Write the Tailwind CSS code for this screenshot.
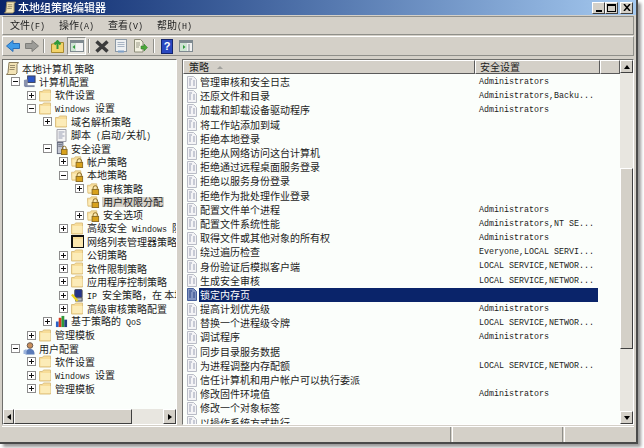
<!DOCTYPE html>
<html lang="zh-CN">
<head>
<meta charset="UTF-8">
<title>本地组策略编辑器</title>
<script src="https://cdn.jsdelivr.net/npm/@tailwindcss/browser@4"></script>
</head>
<body class="bg-white overflow-hidden w-[644px] h-[448px] text-[10px] leading-none text-[#1c1c1c] font-['Noto_Sans_CJK_SC',sans-serif]">
<svg class="hidden">
  <symbol id="doc" viewBox="0 0 12 13"><path d="M1.500.5h6l3 3v9h-9z" fill="#f4f4f6" stroke="#b9bcc6"/><path d="M3 3h3M3 5h2M7 5h2M3 7h2M7 7h2M3 9h2M7 9h2" stroke="#9aa0b4"/></symbol>
  <symbol id="docsel" viewBox="0 0 12 13"><path d="M1.500.5h6l3 3v9h-9z" fill="#8294c0" stroke="#47609c"/><path d="M3 3h3M3 5h2M7 5h2M3 7h2M7 7h2M3 9h2M7 9h2" stroke="#2a4585"/></symbol>
  <symbol id="folder" viewBox="0 0 13 13"><path d="M.5 2.500h3l1-1.500h7v11H.5z" fill="#f8dd98" stroke="#dcc183"/><path d="M1.500 4h10v7h-10z" fill="#fcecb8"/></symbol>
  <symbol id="folderblack" viewBox="0 0 13 13"><path d="M0 0h13v13H0z" fill="#111"/><path d="M2 2h10v10H2z" fill="#f8dd98"/><path d="M2 4h10v8H2z" fill="#fbe7ae"/></symbol>
  <symbol id="lock" viewBox="0 0 14 14"><path d="M.5 3.500h3l1-1.500h6v10h-9.500z" fill="#f8dd98" stroke="#dcc183"/><path d="M1.500 5h8v6h-8z" fill="#fcecb8"/><path d="M6.500 8V6.500a2.500 2.500 0 0 1 5 0V8" fill="none" stroke="#8a6a20"/><rect x="5.500" y="8" width="7" height="5.500" fill="#d8a21c" stroke="#8a6a20"/></symbol>
  <symbol id="plus" viewBox="0 0 9 9"><rect x=".5" y=".5" width="8" height="8" fill="#fff" stroke="#8c8c8c"/><path d="M2 4.500h5M4.500 2v5" stroke="#111"/></symbol>
  <symbol id="minus" viewBox="0 0 9 9"><rect x=".5" y=".5" width="8" height="8" fill="#fff" stroke="#8c8c8c"/><path d="M2 4.500h5" stroke="#111"/></symbol>
  <symbol id="scroll" viewBox="0 0 13 13"><path d="M3 .5h9.500l-1.500 2v8.500l-1.500 1.500H.5l1.500-2z" fill="#f2e3b4" stroke="#8a7d5c"/><path d="M4 3.500h5M4 5.500h5M3.500 7.500h5" stroke="#9a8d6c"/></symbol>
  <symbol id="computer" viewBox="0 0 14 13"><rect x="5" y=".5" width="8" height="7" fill="#2a56c6" stroke="#3a3f58"/><path d="M1 5l4-1v7l-4 1z" fill="#8a93ad"/><path d="M2 11.500h10.500" stroke="#7f8aa6" stroke-width="2"/></symbol>
  <symbol id="user" viewBox="0 0 13 13"><circle cx="7" cy="3.500" r="2.800" fill="#c98f5a" stroke="#6b5a50"/><path d="M2.500 12.500c0-4 1.500-5.500 4.500-5.500s4.500 1.500 4.500 5.500z" fill="#5a7bb8"/><path d="M.5 8.500l3-1.500v5h-3z" fill="#9cb4dc"/></symbol>
  <symbol id="script" viewBox="0 0 12 13"><path d="M1.500.5h9v12h-9z" fill="#f4f4f4" stroke="#a0a0a8"/><path d="M3 3h6M3 5h4M3 7h6M3 9h4" stroke="#9aa0b4"/></symbol>
  <symbol id="secure" viewBox="0 0 13 14"><rect x="2" y=".5" width="6" height="12" fill="#c3c7d2" stroke="#5e6476"/><path d="M3 2.500h4M3 4.500h4" stroke="#5e6476"/><rect x="6.500" y="8" width="6" height="5.500" fill="#d8a21c" stroke="#8a6a20"/><path d="M7.500 8V6.500a2 2 0 0 1 4 0V8" fill="none" stroke="#8a6a20"/></symbol>
  <symbol id="ipsec" viewBox="0 0 13 14"><rect x="3.500" y=".5" width="8" height="9" rx="1" fill="#24348a" stroke="#555"/><rect x="4.500" y="9.500" width="7" height="3.500" fill="#b9bcc6" stroke="#555"/><path d="M.5 6l6 7" stroke="#e8d020" stroke-width="2.500"/></symbol>
  <symbol id="chart" viewBox="0 0 14 14"><rect x="1" y="7" width="3" height="6" fill="#2a62c8"/><rect x="4" y="3" width="3" height="10" fill="#d83a20"/><rect x="7" y="1" width="3" height="12" fill="#2e9a3a"/><rect x="10" y="5" width="3" height="8" fill="#22407e"/></symbol>
</svg>

<div class="w-[638px] h-[444px] bg-[#d4d0c8] border-r-2 border-b-2 border-[#4a4a4a] flex flex-col shadow-[3px_3px_3px_#9a9a9a] blur-[0.3px]">
  <!-- title bar -->
  <div class="h-[15px] shrink-0 flex items-center bg-gradient-to-r from-[#0a246a] to-[#a6caf0] pl-[4px] pr-[3px]">
    <svg class="w-[12px] h-[13px]"><use href="#scroll"/></svg>
    <span class="ml-[2px] text-white font-medium text-[11px]">本地组策略编辑器</span>
    <div class="ml-auto flex items-center">
      <div class="w-[13px] h-[12px] bg-[#d4d0c8] border border-t-white border-l-white border-r-[#404040] border-b-[#404040] flex items-end justify-center pb-[1px]"><div class="w-[6px] h-[2px] bg-black"></div></div>
      <div class="w-[13px] h-[12px] bg-[#d4d0c8] border border-t-white border-l-white border-r-[#404040] border-b-[#404040] flex items-center justify-center"><div class="w-[9px] h-[8px] border border-black border-t-2"></div></div>
      <div class="ml-[2px] w-[13px] h-[12px] bg-[#d4d0c8] border border-t-white border-l-white border-r-[#404040] border-b-[#404040] flex items-center justify-center"><svg class="w-[8px] h-[7px]" viewBox="0 0 8 7"><path d="M1 0l6 7M7 0l-6 7" stroke="#000" stroke-width="1.500"/></svg></div>
    </div>
  </div>
  <!-- menu -->
  <div class="mt-[1px] mx-[2px] h-[19px] shrink-0 flex items-center gap-[14px] pl-[7px] border border-t-[#8f8f8a] border-l-white border-r-[#8f8f8a] border-b-[#8f8f8a]">
    <span>文件<span class="font-['Liberation_Mono'] text-[8.33px]">(F)</span></span>
    <span>操作<span class="font-['Liberation_Mono'] text-[8.33px]">(A)</span></span>
    <span>查看<span class="font-['Liberation_Mono'] text-[8.33px]">(V)</span></span>
    <span>帮助<span class="font-['Liberation_Mono'] text-[8.33px]">(H)</span></span>
  </div>
  <!-- toolbar -->
  <div class="mt-[1px] mx-[2px] h-[20px] shrink-0 flex items-center pl-[3px] border border-t-white border-l-white border-r-[#8f8f8a] border-b-[#8f8f8a]">
    <svg class="w-[14px] h-[12px]" viewBox="0 0 14 12"><path d="M7 .5L.5 6 7 11.500V8.500h6.500v-5H7z" fill="#3f9be8" stroke="#2a6fb8"/></svg>
    <svg class="ml-[5px] w-[14px] h-[12px]" viewBox="0 0 14 12"><path d="M7 .5L13.500 6 7 11.500V8.500H.5v-5H7z" fill="#9c9c98" stroke="#7e7e7a"/></svg>
    <div class="ml-[4px] w-[2px] h-[14px] border-l border-[#8f8f8a] border-r border-r-white"></div>
    <svg class="ml-[6px] w-[13px] h-[13px]" viewBox="0 0 13 13"><path d="M.5 4h2l1-1.500h9V12.500H.5z" fill="#f2d36a" stroke="#a88a30"/><path d="M6.500 9V3M3.500 4.500L6.500 1l3 3.500" fill="none" stroke="#2e9a3a" stroke-width="2"/></svg>
    <div class="ml-[3px] w-[19px] h-[18px] bg-[#e6e4de] border border-t-[#8f8f8a] border-l-[#8f8f8a] border-r-white border-b-white flex items-center justify-center">
      <svg class="w-[14px] h-[12px]" viewBox="0 0 14 12"><rect x=".5" y=".5" width="13" height="11" fill="#f2f2f2" stroke="#7f8a90"/><path d="M1 1h12v2H1z" fill="#7f8a90"/><path d="M1 3h5v8H1z" fill="#cfe4d4"/><path d="M5 5v4L2.500 7z" fill="#2e9a3a"/></svg>
    </div>
    <div class="ml-[2px] w-[2px] h-[14px] border-l border-[#8f8f8a] border-r border-r-white"></div>
    <svg class="ml-[5px] w-[14px] h-[13px]" viewBox="0 0 14 13"><path d="M1.500 1.500l11 10M12.500 1.500l-11 10" stroke="#3c3c3c" stroke-width="3.500"/></svg>
    <svg class="ml-[5px] w-[14px] h-[14px]" viewBox="0 0 14 14"><rect x="1.500" y=".5" width="11" height="12" fill="#eef0f2" stroke="#8c98a4"/><path d="M3.500 3.500h7M3.500 5.500h7M3.500 7.500h7" stroke="#a8b4c4"/><path d="M4 12.500h6" stroke="#7fa0c8" stroke-width="2"/></svg>
    <svg class="ml-[5px] w-[15px] h-[14px]" viewBox="0 0 15 14"><path d="M1.500.5h6l2.500 2.500v10h-8.500z" fill="#f2f0e0" stroke="#8c8c78"/><path d="M3 4h4M3 6h4M3 8h3" stroke="#9a9a88"/><path d="M8 7h3V5l3.500 3.500L11 12v-2H8z" fill="#4aa838" stroke="#2e7a28" stroke-width=".5"/></svg>
    <div class="ml-[5px] w-[2px] h-[14px] border-l border-[#8f8f8a] border-r border-r-white"></div>
    <div class="ml-[6px] w-[12px] h-[15px] bg-[#2a48c0] border border-[#14246e] text-white text-center font-bold text-[11px] leading-[13px] font-['Liberation_Sans']">?</div>
    <svg class="ml-[6px] w-[14px] h-[12px]" viewBox="0 0 14 12"><rect x=".5" y=".5" width="13" height="11" fill="#f2f2f2" stroke="#7f8a90"/><path d="M1 1h12v2H1z" fill="#7f8a90"/><path d="M1 3h7v8H1z" fill="#cfe4d4"/><path d="M4 5v4l2.500-2z" fill="#2e9a3a"/><path d="M10 4v7" stroke="#7f8a90"/></svg>
  </div>
  <!-- panes -->
  <div class="mt-[3px] flex-1 min-h-0 flex pl-[2px] pr-[2px]">
    <div class="w-[175px] shrink-0 flex flex-col border border-t-[#6f6f6c] border-l-[#6f6f6c] border-r-white border-b-white overflow-hidden">
      <div id="tree" class="flex-1 min-h-0 bg-[#fbfefb] pt-[2px] overflow-hidden"></div>
      <div class="h-[15px] shrink-0 flex bg-[#d4d0c8]">
        <div class="w-[11px] border border-t-white border-l-white border-r-[#404040] border-b-[#404040] flex items-center justify-center"><div class="w-0 h-0 border-y-[3.500px] border-y-transparent border-r-[4px] border-r-black"></div></div>
        <div class="w-[118px] border border-t-white border-l-white border-r-[#404040] border-b-[#404040]"></div>
        <div class="flex-1 bg-[#e8e6e0]"></div>
        <div class="w-[13px] border border-t-white border-l-white border-r-[#404040] border-b-[#404040] flex items-center justify-center"><div class="w-0 h-0 border-y-[3.500px] border-y-transparent border-l-[4px] border-l-black"></div></div>
      </div>
    </div>
    <div class="w-[5px] shrink-0"></div>
    <div class="flex-1 min-w-0 flex border border-t-[#6f6f6c] border-l-[#6f6f6c] border-r-white border-b-white overflow-hidden">
      <div class="flex-1 min-w-0 flex flex-col overflow-hidden">
        <div class="h-[14px] shrink-0 flex bg-[#d4d0c8]">
          <div class="w-[292px] flex items-center pl-[5px] border border-t-white border-l-white border-r-[#5a5a5a] border-b-[#5a5a5a]">策略<div class="ml-[8px] w-0 h-0 border-x-[3px] border-x-transparent border-b-[3px] border-b-[#a0a09c]"></div></div>
          <div class="w-[125px] flex items-center pl-[4px] border border-t-white border-l-white border-r-[#5a5a5a] border-b-[#5a5a5a]">安全设置</div>
          <div class="flex-1 border border-t-white border-l-white border-r-[#5a5a5a] border-b-[#5a5a5a]"></div>
        </div>
        <div id="list" class="flex-1 min-h-0 bg-[#fbfefb] pt-[1px] overflow-hidden"></div>
      </div>
      <div class="w-[13px] shrink-0 flex flex-col bg-[#e8e6e0]">
        <div class="h-[13px] bg-[#d4d0c8] border border-t-white border-l-white border-r-[#404040] border-b-[#404040] flex items-center justify-center"><div class="w-0 h-0 border-x-[3.500px] border-x-transparent border-b-[4px] border-b-black"></div></div>
        <div class="h-[95px]"></div>
        <div class="h-[181px] bg-[#d4d0c8] border border-t-white border-l-white border-r-[#404040] border-b-[#404040]"></div>
        <div class="flex-1"></div>
        <div class="h-[13px] bg-[#d4d0c8] border border-t-white border-l-white border-r-[#404040] border-b-[#404040] flex items-center justify-center"><div class="w-0 h-0 border-x-[3.500px] border-x-transparent border-t-[4px] border-t-black"></div></div>
      </div>
    </div>
  </div>
  <!-- status bar -->
  <div class="mt-[1px] mx-[2px] h-[16px] shrink-0 flex border-t border-white">
    <div class="w-[449px] border-r border-[#8f8f8a]"></div>
    <div class="w-[2px] border-r border-white"></div>
    <div class="w-[110px] border-r border-[#8f8f8a]"></div>
    <div class="w-[2px] border-r border-white"></div>
    <div class="flex-1"></div>
  </div>
</div>

<script>
  const latin = s => s.replace(/[\x20-\x7e]*[\x21-\x7e][\x20-\x7e]*/g, m => `<span class="font-['Liberation_Mono'] text-[8.33px]">${m}</span>`);

  // level, expander, icon, label
  const treeRows = [
    [0, '', 'scroll', '本地计算机 策略'],
    [1, 'minus', 'computer', '计算机配置'],
    [2, 'plus', 'folder', '软件设置'],
    [2, 'minus', 'folder', 'Windows 设置'],
    [3, 'plus', 'folder', '域名解析策略'],
    [3, '', 'script', '脚本 (启动/关机)'],
    [3, 'minus', 'secure', '安全设置'],
    [4, 'plus', 'lock', '帐户策略'],
    [4, 'minus', 'lock', '本地策略'],
    [5, 'plus', 'lock', '审核策略'],
    [5, '', 'lock', '用户权限分配', true],
    [5, 'plus', 'lock', '安全选项'],
    [4, 'plus', 'folder', '高级安全 Windows 防火墙'],
    [4, '', 'folderblack', '网络列表管理器策略'],
    [4, 'plus', 'folder', '公钥策略'],
    [4, 'plus', 'folder', '软件限制策略'],
    [4, 'plus', 'folder', '应用程序控制策略'],
    [4, 'plus', 'ipsec', 'IP 安全策略，在 本地计算机'],
    [4, 'plus', 'folder', '高级审核策略配置'],
    [3, 'plus', 'chart', '基于策略的 QoS'],
    [2, 'plus', 'folder', '管理模板'],
    [1, 'minus', 'user', '用户配置'],
    [2, 'plus', 'folder', '软件设置'],
    [2, 'plus', 'folder', 'Windows 设置'],
    [2, 'plus', 'folder', '管理模板'],
  ];

  document.getElementById('tree').innerHTML = treeRows.map(([level, exp, icon, label, sel]) => `
    <div class="h-[13.33px] flex items-center whitespace-nowrap" style="padding-left:${level ? level * 16 - 8 : 3}px">
      ${level ? `<span class="w-[9px] h-[9px] shrink-0 mr-[3px]">${exp ? `<svg class="w-[9px] h-[9px] block"><use href="#${exp}"/></svg>` : ''}</span>` : ''}
      <svg class="w-[13px] h-[13px] shrink-0"><use href="#${icon}"/></svg>
      <span class="ml-[2px] px-[1px] ${sel ? 'bg-[#d4d0c8]' : ''}">${latin(label)}</span>
    </div>`).join('');

  const admin = 'Administrators';
  const listRows = [
    ['管理审核和安全日志', admin],
    ['还原文件和目录', 'Administrators,Backu...'],
    ['加载和卸载设备驱动程序', admin],
    ['将工作站添加到域', ''],
    ['拒绝本地登录', ''],
    ['拒绝从网络访问这台计算机', ''],
    ['拒绝通过远程桌面服务登录', ''],
    ['拒绝以服务身份登录', ''],
    ['拒绝作为批处理作业登录', ''],
    ['配置文件单个进程', admin],
    ['配置文件系统性能', 'Administrators,NT SE...'],
    ['取得文件或其他对象的所有权', admin],
    ['绕过遍历检查', 'Everyone,LOCAL SERVI...'],
    ['身份验证后模拟客户端', 'LOCAL SERVICE,NETWOR...'],
    ['生成安全审核', 'LOCAL SERVICE,NETWOR...'],
    ['锁定内存页', '', true],
    ['提高计划优先级', admin],
    ['替换一个进程级令牌', 'LOCAL SERVICE,NETWOR...'],
    ['调试程序', admin],
    ['同步目录服务数据', ''],
    ['为进程调整内存配额', 'LOCAL SERVICE,NETWOR...'],
    ['信任计算机和用户帐户可以执行委派', ''],
    ['修改固件环境值', admin],
    ['修改一个对象标签', ''],
    ['以操作系统方式执行', ''],
  ];

  document.getElementById('list').innerHTML = listRows.map(([name, value, sel]) => `
    <div class="h-[14.2px] flex items-center whitespace-nowrap pl-[3px]">
      <svg class="w-[12px] h-[13px] shrink-0"><use href="#${sel ? 'docsel' : 'doc'}"/></svg>
      <div class="ml-[1px] w-[399px] h-full flex items-center ${sel ? 'bg-[#0a246a] text-white' : ''}">
        <span class="w-[280px] shrink-0 pl-[1px]">${name}</span>
        <span class="font-['Liberation_Mono'] text-[8.33px]">${value}</span>
      </div>
    </div>`).join('');
</script>
</body>
</html>
